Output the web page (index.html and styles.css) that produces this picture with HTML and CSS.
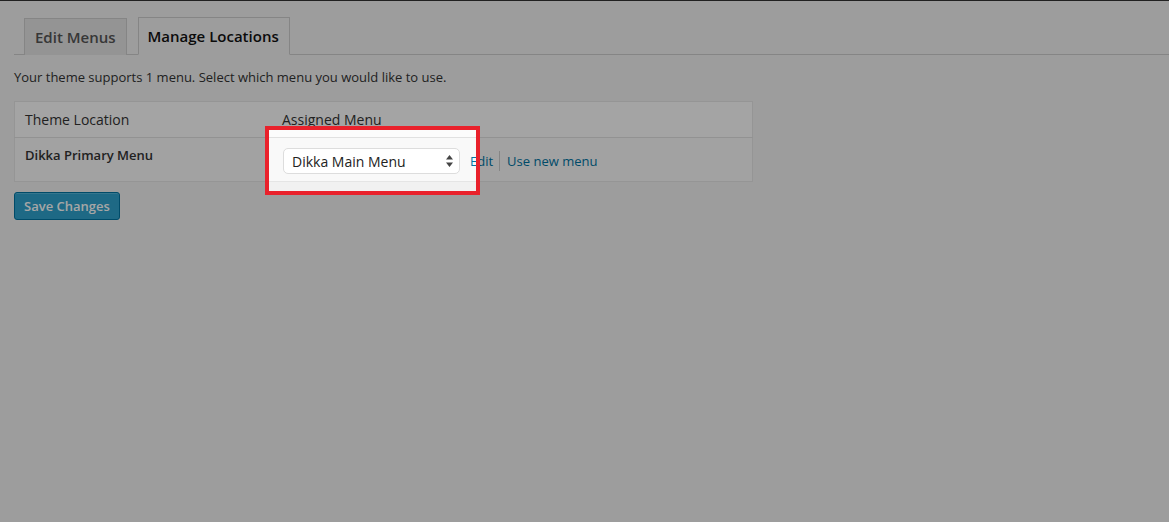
FILE: index.html
```html
<!DOCTYPE html>
<html>
<head>
<meta charset="utf-8">
<link rel="stylesheet" href="styles.css">
</head>
<body>
<div class="topbar"></div>
<div class="wrap">
  <nav class="tabs">
    <a class="tab">Edit Menus</a>
    <a class="tab tab-active">Manage Locations</a>
  </nav>
  <p class="intro">Your theme supports 1 menu. Select which menu you would like to use.</p>
  <table class="locations">
    <thead>
      <tr><th class="col-loc">Theme Location</th><th class="col-menu">Assigned Menu</th></tr>
    </thead>
    <tbody>
      <tr>
        <td class="loc-name">Dikka Primary Menu</td>
        <td class="menu-cell">
          <div class="menu-controls">
            <div class="select-wrap">
              <div class="select">
                <span>Dikka Main Menu</span>
                <svg class="arrows" width="7" height="12" viewBox="0 0 7 12"><path d="M3.5 0 L7 4.5 L0 4.5 Z M0 7.5 L7 7.5 L3.5 12 Z" fill="#444"/></svg>
              </div>
              <div class="spotlight"></div>
            </div>
            <a class="link">Edit</a>
            <span class="sep"></span>
            <a class="link">Use new menu</a>
          </div>
        </td>
      </tr>
    </tbody>
  </table>
  <button class="save">Save Changes</button>
</div>
</body>
</html>
```
FILE: styles.css
```css
html, body {
  margin: 0;
  padding: 0;
  background: #f1f1f1;
  height: 100%;
  overflow: hidden;
}
body {
  font-family: "Open Sans", "Noto Sans", sans-serif;
  color: #444;
}
.topbar {
  height: 1px;
  background: #333;
}
.wrap {
  padding: 0 0 0 14px;
}
.tabs {
  display: flex;
  gap: 11px;
  padding-left: 10px;
  margin-top: 17px;
  border-bottom: 1px solid #ccc;
  height: 37px;
  box-sizing: border-box;
  align-items: flex-end;
}
.tab {
  display: flex;
  align-items: center;
  height: 37px;
  box-sizing: border-box;
  padding: 0 10px;
  border: 1px solid #ccc;
  border-bottom: none;
  background: #e4e4e4;
  color: #555;
  font-size: 15px;
  font-weight: 600;
  margin-bottom: -1px;
}
.tab-active {
  background: #f1f1f1;
  color: #111;
  height: 38px;
  padding: 0 10px 0 9px;
  border-bottom: 1px solid #f1f1f1;
}
.intro {
  margin: 13px 0 0;
  font-size: 13px;
  line-height: 18px;
  color: #333;
}
.locations {
  margin-top: 15px;
  width: 739px;
  border-collapse: collapse;
  background: #f9f9f9;
  border: 1px solid #e5e5e5;
}
.locations th {
  text-align: left;
  font-weight: 400;
  font-size: 14px;
  color: #333;
  height: 35px;
  padding: 0 10px;
  background: #fcfcfc;
  border-bottom: 1px solid #e1e1e1;
}
.col-loc {
  width: 237px;
}
.locations td {
  vertical-align: top;
  padding: 10px 10px 7px;
}
.loc-name {
  font-weight: 600;
  font-size: 13px;
  color: #333;
  padding-top: 8px !important;
  line-height: 18px;
}
.menu-cell {
  padding-left: 11px !important;
}
.menu-controls {
  display: flex;
  align-items: center;
  height: 26px;
}
.select-wrap {
  position: relative;
}
.select {
  width: 177px;
  height: 26px;
  box-sizing: border-box;
  display: flex;
  align-items: center;
  justify-content: space-between;
  padding: 0 5px 0 8px;
  background: #fff;
  border: 1px solid #ddd;
  border-radius: 5px;
  font-size: 14px;
  color: #222;
}
.arrows {
  margin-right: 1px;
}
.spotlight {
  position: absolute;
  left: -18px;
  top: -22px;
  width: 215px;
  height: 69px;
  box-sizing: border-box;
  border: 4px solid #e9212b;
  box-shadow: 0 0 0 3000px rgba(0, 0, 0, 0.35);
  z-index: 10;
  pointer-events: none;
}
.link {
  color: #0074a2;
  font-size: 13px;
}
.select-wrap + .link {
  margin-left: 10px;
}
.sep {
  width: 1px;
  height: 20px;
  background: #ccc;
  margin: 0 7px 0 6px;
}
.save {
  margin-top: 10px;
  height: 28px;
  padding: 0 9px;
  background: #2ea2cc;
  border: 1px solid #0074a2;
  border-radius: 3px;
  color: #fff;
  font-family: "Open Sans", "Noto Sans", sans-serif;
  font-size: 13px;
  font-weight: 600;
  box-shadow: inset 0 1px 0 rgba(120, 200, 230, 0.5);
}
```
